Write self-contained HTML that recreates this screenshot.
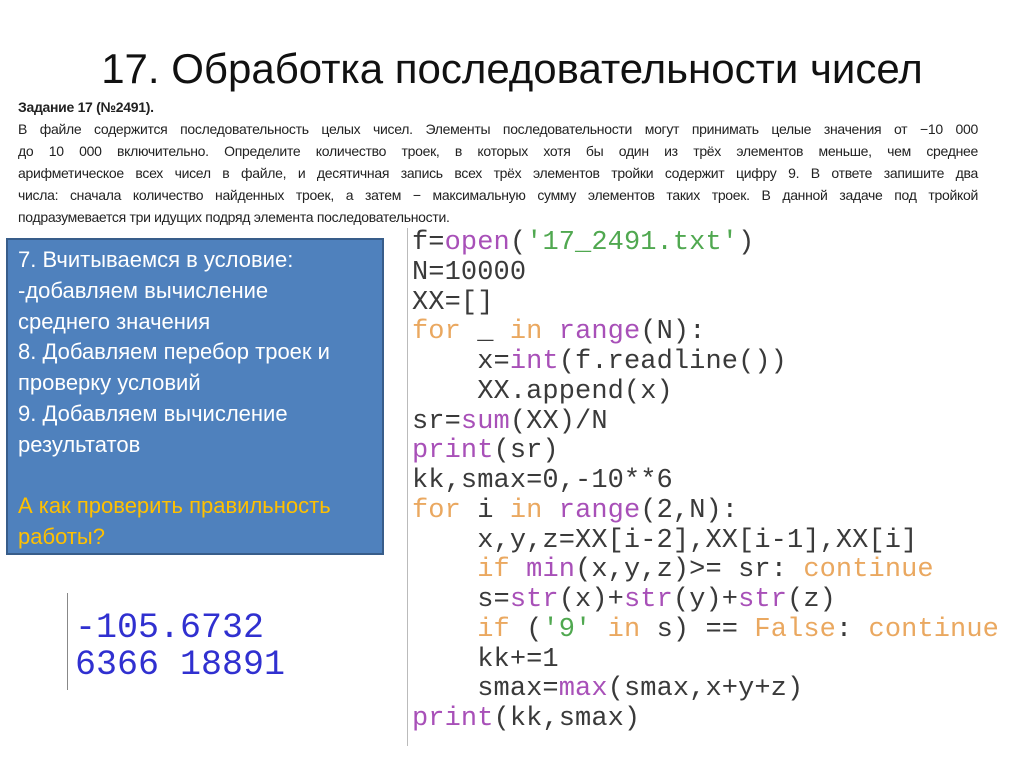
<!DOCTYPE html>
<html><head><meta charset="utf-8"><style>
body{margin:0;width:1024px;height:767px;background:#fff;position:relative;overflow:hidden;font-family:"Liberation Sans","DejaVu Sans",sans-serif}
.title{position:absolute;left:0;width:1024px;top:44px;text-align:center;font-size:42px;color:#111;line-height:50px}
.task{position:absolute;left:18px;width:960px;top:96px;font-size:14px;letter-spacing:-0.3px;color:#222;line-height:22px}
.task div{white-space:nowrap}
.task .j{text-align:justify;text-align-last:justify;white-space:normal}
.box{position:absolute;left:6px;top:238px;width:378px;height:317px;background:#4f81bd;border:2px solid #385d8a;box-sizing:border-box;color:#fff;font-size:22px;line-height:30.8px;padding:5px 0 0 10px;white-space:nowrap}
.y{color:#ffc000}
.code{position:absolute;left:412px;top:229px;font-family:"Liberation Mono",monospace;font-size:27px;line-height:29.75px;color:#3a3a3a;white-space:pre;letter-spacing:0.1px}
.k{color:#eaa860}.b{color:#a850b8}.s{color:#50a850}
.vl{position:absolute;left:407px;top:228px;width:1px;height:518px;background:#bbb}
.out{position:absolute;left:75px;top:610px;font-family:"Liberation Mono",monospace;font-size:35px;line-height:37px;color:#3030d0;white-space:pre}
.vl2{position:absolute;left:67px;top:593px;width:1px;height:97px;background:#888}
</style></head><body>
<div class="title">17. Обработка последовательности чисел</div>
<div class="task">
<div><b>Задание 17 (№2491).</b></div>
<div class="j">В файле содержится последовательность целых чисел. Элементы последовательности могут принимать целые значения от −10 000</div>
<div class="j">до 10 000 включительно. Определите количество троек, в которых хотя бы один из трёх элементов меньше, чем среднее</div>
<div class="j">арифметическое всех чисел в файле, и десятичная запись всех трёх элементов тройки содержит цифру 9. В ответе запишите два</div>
<div class="j">числа: сначала количество найденных троек, а затем − максимальную сумму элементов таких троек. В данной задаче под тройкой</div>
<div>подразумевается три идущих подряд элемента последовательности.</div>
</div>
<div class="box">7. Вчитываемся в условие:<br>-добавляем вычисление<br>среднего значения<br>8. Добавляем перебор троек и<br>проверку условий<br>9. Добавляем вычисление<br>результатов<br><br><span class="y">А как проверить правильность<br>работы?</span></div>
<div class="vl"></div>
<div class="code">f=<span class="b">open</span>(<span class="s">'17_2491.txt'</span>)
N=10000
XX=[]
<span class="k">for</span> _ <span class="k">in</span> <span class="b">range</span>(N):
    x=<span class="b">int</span>(f.readline())
    XX.append(x)
sr=<span class="b">sum</span>(XX)/N
<span class="b">print</span>(sr)
kk,smax=0,-10**6
<span class="k">for</span> i <span class="k">in</span> <span class="b">range</span>(2,N):
    x,y,z=XX[i-2],XX[i-1],XX[i]
    <span class="k">if</span> <span class="b">min</span>(x,y,z)&gt;= sr: <span class="k">continue</span>
    s=<span class="b">str</span>(x)+<span class="b">str</span>(y)+<span class="b">str</span>(z)
    <span class="k">if</span> (<span class="s">'9'</span> <span class="k">in</span> s) == <span class="k">False</span>: <span class="k">continue</span>
    kk+=1
    smax=<span class="b">max</span>(smax,x+y+z)
<span class="b">print</span>(kk,smax)</div>
<div class="vl2"></div>
<div class="out">-105.6732
6366 18891</div>
</body></html>
